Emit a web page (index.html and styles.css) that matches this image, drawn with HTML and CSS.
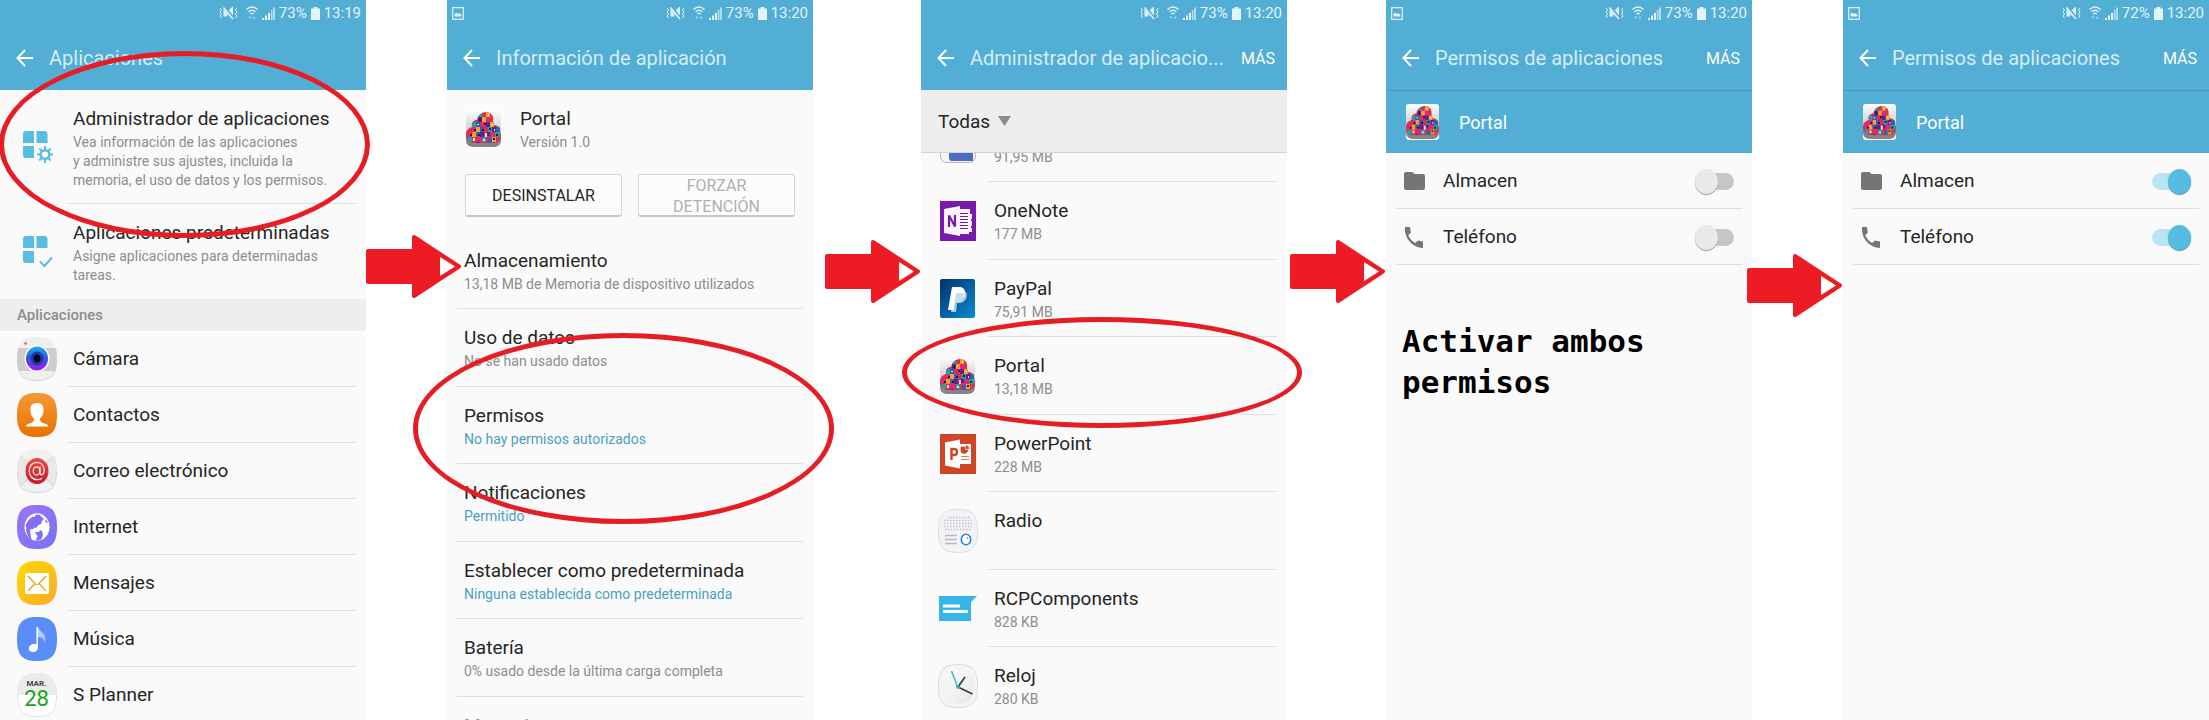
FILE: index.html
```html
<!DOCTYPE html>
<html lang="es">
<head>
<meta charset="utf-8">
<meta name="viewport" content="width=device-width, initial-scale=1">
<title>Activar permisos de Portal</title>
<link rel="stylesheet" href="styles.css">
</head>
<body>
<svg class="defs" width="0" height="0" aria-hidden="true">
  <defs>
    <linearGradient id="g-orange" x1="0" y1="0" x2="0" y2="1"><stop offset="0" stop-color="#f39a35"/><stop offset="1" stop-color="#ea7100"/></linearGradient>
    <linearGradient id="g-violet" x1="0" y1="0" x2="1" y2="1"><stop offset="0" stop-color="#9d74f5"/><stop offset="1" stop-color="#7672f8"/></linearGradient>
    <linearGradient id="g-yellow" x1="0" y1="0" x2="1" y2="1"><stop offset="0" stop-color="#fddb00"/><stop offset="1" stop-color="#fda827"/></linearGradient>
    <linearGradient id="g-lens" x1="0" y1="0" x2="0" y2="1"><stop offset="0" stop-color="#12b5ea"/><stop offset=".5" stop-color="#3552e0"/><stop offset="1" stop-color="#a417f5"/></linearGradient>
    <linearGradient id="g-mail" x1="0" y1="0" x2="0" y2="1"><stop offset="0" stop-color="#ee4a3f"/><stop offset="1" stop-color="#cb1730"/></linearGradient>
    <linearGradient id="g-pay" x1="0" y1="0" x2="1" y2="1"><stop offset="0" stop-color="#05306f"/><stop offset="1" stop-color="#078cd2"/></linearGradient>
    <linearGradient id="g-tile" x1="0" y1="0" x2="0" y2="1"><stop offset="0" stop-color="#fdfdfd"/><stop offset=".55" stop-color="#cfcfcf"/><stop offset="1" stop-color="#858585"/></linearGradient>
    <linearGradient id="g-soft" x1="0" y1="0" x2="1" y2="1"><stop offset="0" stop-color="#fbfbfb"/><stop offset="1" stop-color="#e8e6ea"/></linearGradient>
    <clipPath id="c-squircle"><path d="M20 0C34 0 40 5 40 22S34 44 20 44 0 39 0 22 6 0 20 0z"/></clipPath>
    <clipPath id="c-cloud"><path d="M7 33a8 8 0 0 1-7-8c0-5 3-7 6-8-1-5 2-7 5-7 1-5 5-8 9-8s8 3 7 9l1 4c4 0 7 3 6 7 2 3 1 11-5 11z"/></clipPath>

    <symbol id="mute" viewBox="0 0 19 14">
      <path d="M4.500 3.500h3.500v7H4.500zM14 .5v12.500l-6-4.500V5.500z" fill="currentColor"/>
      <path d="M5 .5l9.500 12.500" stroke="#52aed5" stroke-width="3.400"/>
      <path d="M4.500 1.500l9.500 11.500" stroke="currentColor" stroke-width="1.500"/>
      <path d="M1 2l1.500 2L1 6l1.500 2L1 10l1.500 2M18 2l-1.500 2L18 6l-1.500 2 1.500 2-1.500 2" fill="none" stroke="currentColor"/>
    </symbol>
    <symbol id="wifi" viewBox="0 0 12 14">
      <path d="M.5 3.500q5.500-5 11 0M2.500 5.800q3.500-3 7 0M4.300 8q1.700-1.500 3.400 0" fill="none" stroke="currentColor" stroke-width="1.400"/>
      <path d="M2.500 10.500h3L4 13zM6.500 12.500h3L8 10z" fill="currentColor" opacity=".6"/>
    </symbol>
    <symbol id="signal" viewBox="0 0 13 13">
      <path d="M0 11h2v2H0zM3 8.500h2V13H3zM6 6h2v7H6z" fill="currentColor"/>
      <path d="M8.800 3h1.700v10H8.800zM11 .5h2V13h-2z" fill="currentColor" opacity=".65"/>
    </symbol>
    <symbol id="battery" viewBox="0 0 9 13"><path d="M2.500 0h4v1.500H9V13H0V1.500h2.500z" fill="currentColor"/></symbol>
    <symbol id="picture" viewBox="0 0 12 13">
      <rect x=".7" y=".7" width="10.600" height="11.600" fill="none" stroke="currentColor" stroke-width="1.200"/>
      <path d="M2.500 9.500V7l2-1.500L6 7l1.500-1 2 2v1.500z" fill="currentColor"/>
    </symbol>
    <symbol id="back" viewBox="0 0 18 18"><path d="M17 9H2M9 1L1.500 9 9 17" fill="none" stroke="currentColor" stroke-width="2"/></symbol>

    <symbol id="tiles" viewBox="0 0 30 32">
      <path d="M3 0h8v12H0V3q0-3 3-3zM13.500 0h8q3 0 3 3v9h-11zM0 15h11v12H3q-3 0-3-3z" fill="#59bce2"/>
    </symbol>
    <symbol id="gear" viewBox="0 0 16 17">
      <circle cx="8" cy="8.500" r="4.300" fill="none" stroke="#59bce2" stroke-width="2.400"/>
      <path d="M8 0v4M8 13v4M0 8.500h3.500M12.500 8.500H16M2.300 2.500L5 5.200M11 11.800l2.700 2.700M13.700 2.500L11 5.200M5 11.800l-2.700 2.700" stroke="#59bce2" stroke-width="2"/>
    </symbol>

    <symbol id="portal" viewBox="0 0 35 38">
      <rect width="35" height="38" rx="3" fill="url(#g-tile)"/>
      <path d="M0 28v7q0 3 3 3h29q3 0 3-3v-7z" fill="#fff"/>
      <path d="M0 24h35v6q0 7-7 7H7q-7 0-7-7z" fill="#858585"/>
      <g clip-path="url(#c-cloud)">
        <path d="M0 0h35v38H0z" fill="#d8324a"/>
        <path d="M12 2h4v5h-4zM6 12h4v5H6zM22 17h4v5h-4zM2 27h4v5H2zM29 22h5v5h-5zM16 27h4v5h-4z" fill="#1fa5a0"/>
        <path d="M16 7h4v5h-4zM10 17h4v5h-4zM24 12h4v5h-4zM6 22h4v5H6zM26 27h4v5h-4zM20 2h4v5h-4z" fill="#f0a42c"/>
        <path d="M12 7h4v5h-4zM20 12h4v5h-4zM14 22h4v5h-4zM26 17h4v5h-4zM20 22h4v4h-4zM10 32h4v4h-4z" fill="#5b2390"/>
        <path d="M20 7h4v5h-4zM6 17h4v5H6zM16 12h4v5h-4zM1 22h5v5H1zM24 22h4v5h-4zM12 27h4v5h-4z" fill="#e02583"/>
        <path d="M10 12h4v5h-4zM14 17h4v5h-4zM30 17h4v5h-4zM10 22h4v4h-4zM22 28h4v6h-4z" fill="#2f5fb8"/>
        <path d="M13 9h2v2h-2zM18 13h2v2h-2zM23 18h2v2h-2zM8 19h2v2H8zM12 24h2v2h-2zM27 28h2v2h-2zM30 24h2v2h-2zM4 24h2v2H4zM16 19h2v2h-2z" fill="#2a1830"/>
        <path d="M22 4h1v2h-1zM25 14h2v1h-2zM19 23h2v4h-2zM7 28h2v3H7zM28 19h1v2h-1zM11 14h2v1h-2zM17 29h2v2h-2z" fill="#f6d9e2"/>
      </g>
    </symbol>

    <symbol id="camera" viewBox="0 0 40 44">
      <g clip-path="url(#c-squircle)">
        <path d="M0 0h40v44H0z" fill="#efefef"/><path d="M0 11h40v23H0z" fill="#cdcdcd"/>
        <path d="M20 43.500C34 43.500 39.500 39 39.500 22" fill="none" stroke="#cfcfcf"/><path d="M20 43.500C6 43.500 .5 39 .5 22" fill="none" stroke="#cfcfcf"/>
      </g>
      <circle cx="8.500" cy="6.500" r="1.300" fill="#f0603a"/>
      <ellipse cx="20" cy="21.500" rx="12.500" ry="13.500" fill="#fff"/>
      <ellipse cx="20" cy="21.500" rx="11" ry="12" fill="url(#g-lens)"/>
      <ellipse cx="20" cy="21.500" rx="6.500" ry="7" fill="#243aa8"/>
      <ellipse cx="20" cy="21.500" rx="3.500" ry="4" fill="#08081c"/>
    </symbol>
    <symbol id="contact" viewBox="0 0 40 44">
      <path d="M0 0h40v44H0z" fill="url(#g-orange)" clip-path="url(#c-squircle)"/>
      <path d="M20 10c5 0 7 3 6.500 8-.3 4-2 6-3.500 7.500 0 3 1 4 4 4.800 3 .8 4 1.700 4 3.200H9c0-1.500 1-2.400 4-3.200 3-.8 4-1.800 4-4.800-1.500-1.500-3.200-3.500-3.500-7.500-.5-5 1.500-8 6.500-8z" fill="#fff"/>
    </symbol>
    <symbol id="mail" viewBox="0 0 40 44">
      <g clip-path="url(#c-squircle)">
        <path d="M0 0h40v44H0z" fill="#f1f1f1"/><path d="M0 4l20 18L0 40zM40 4L20 22l20 18z" fill="#e8e8e8"/>
        <path d="M0 4l20 18L0 40M40 4L20 22l20 18" fill="none" stroke="#d3d3d3"/>
        <path d="M20 43.500C34 43.500 39.500 39 39.500 22M20 43.500C6 43.500 .5 39 .5 22" fill="none" stroke="#d3d3d3"/>
      </g>
      <ellipse cx="20" cy="22" rx="11.500" ry="13" fill="url(#g-mail)"/>
      <g fill="none" stroke="#ffe9e6" stroke-width="1.300">
        <ellipse cx="19.500" cy="22" rx="3.300" ry="4"/>
        <path d="M23 17.500v6.500q.5 2.500 2.500 1.500c3-3 2-12-5.500-12.200-10.500 0-10.500 17.400.5 17.400q2.500 0 4.500-1.500"/>
      </g>
    </symbol>
    <symbol id="globe" viewBox="0 0 40 44">
      <path d="M0 0h40v44H0z" fill="url(#g-violet)" clip-path="url(#c-squircle)"/>
      <ellipse cx="20" cy="22" rx="12.500" ry="13.800" fill="#fff"/>
      <path d="M11.500 15l4-3.500 2 .5 1.500-2.500 4 .5 2 2.500 2 1-2 2.500-1 3-2.500 1-2.500 3-2-.5-1 2-2.500-.5-1 2-3-2-1-4z" fill="#836ff6"/>
      <path d="M9 23.500l4 1.500 4.500 2.500-.5 3-2 2.500-1 2C11 32 9 28 9 23.500zM18 27l4 0 1-2 2 1 1 4-1.500 4-3 1.500-3 0 2-4z" fill="#836ff6"/>
      <path d="M13 25l4 1.500 2 2.500-2 2.500-1 3.500-2-2z" fill="#fff"/>
      <path d="M29 14l2 4-3-1z" fill="#836ff6"/>
    </symbol>
    <symbol id="sms" viewBox="0 0 40 44">
      <path d="M0 0h40v44H0z" fill="url(#g-yellow)" clip-path="url(#c-squircle)"/>
      <rect x="8" y="12" width="24" height="21" rx="1.500" fill="#fff"/>
      <path d="M11 15l7.500 8q1.500 1.200 3 0L29 15M11 30l6.500-7M29 30l-6.500-7" fill="none" stroke="#e9a820" stroke-width="1.400"/>
    </symbol>
    <symbol id="music" viewBox="0 0 40 44">
      <path d="M0 0h40v44H0z" fill="#5a8df8" clip-path="url(#c-squircle)"/>
      <path d="M21 10c2 6 9 5 7 16-1-4-3-6-7-6z" fill="#b3cbfc"/>
      <path d="M19.500 10H21v20c0 3-2 5-5 5-5 0-5.500-5-1.500-7.500 2-1 4-1 5 0z" fill="#fff"/>
    </symbol>
    <symbol id="planner" viewBox="0 0 40 44">
      <g clip-path="url(#c-squircle)"><path d="M0 0h40v44H0z" fill="#fff"/><path d="M0 0h40v22H0z" fill="#ebebeb"/>
      <path d="M20 43.500C34 43.500 39.500 39 39.500 22M20 43.500C6 43.500 .5 39 .5 22" fill="none" stroke="#dcdcdc"/></g>
    </symbol>

    <symbol id="mystery" viewBox="0 0 36 38"><rect x=".5" y=".5" width="35" height="37" rx="6" fill="#f4f4f4" stroke="#b8b8b8"/><path d="M9 2h24v34H12q-3 0-3-3z" fill="#4b6bc0"/></symbol>
    <symbol id="onenote" viewBox="0 0 36 40">
      <path d="M0 0h36v40H0z" fill="#7719aa"/>
      <path d="M19 8h11v5h2v5h-1v2h1v5h-1v2h1v4h-3v2H19z" fill="#fbf5ff"/>
      <path d="M20 12.500h8M20 15.500h8M20 18.500h8M20 21.500h8M20 24.500h8M20 27.500h8" stroke="#7719aa"/>
      <path d="M4 8l16-3v30L4 32z" fill="#fbf5ff"/>
      <path d="M9 26V14.500l6 11V14" fill="none" stroke="#7719aa" stroke-width="2.200"/>
    </symbol>
    <symbol id="paypal" viewBox="0 0 35 39">
      <rect width="35" height="39" rx="2" fill="url(#g-pay)"/>
      <path d="M15 12h9c5 1 3.500 12-5 12h-2l-1 9h-5z" fill="#a9cde6"/>
      <path d="M12 8h8c8 0 6 15-3 15h-2l-1.500 8H8z" fill="#fff"/>
      <path d="M16 14h7.500c1 5-2 9-6.500 9h-2.500z" fill="#c9dfef"/>
    </symbol>
    <symbol id="powerpoint" viewBox="0 0 36 40">
      <path d="M0 0h36v40H0z" fill="#d04526"/>
      <path d="M20 10h11v20H20z" fill="#fff"/>
      <path d="M21 13h4v3h3a4 4 0 0 1-7 2zM26 11.500a4 4 0 0 1 3 3h-3zM21 22.500h8M21 25.500h8" fill="#d04526" stroke="#d04526" stroke-width=".7"/>
      <path d="M5 8.500l15-3v29l-15-3z" fill="#fff"/>
      <path d="M11.500 26V15h2.500c4 0 4 6 0 6h-2" fill="none" stroke="#d04526" stroke-width="2.400"/>
    </symbol>
    <symbol id="radio" viewBox="0 0 40 44">
      <path d="M20 .5C34 .5 39.500 5 39.500 22S34 43.500 20 43.500 .5 39 .5 22 6 .5 20 .5z" fill="#f3f2f6" stroke="#dddde2"/>
      <path d="M9 8.500h24M6 11.500h28M6 14.500h28M6 17.500h28M7 20.500h26" stroke="#c6c6ca" stroke-width="1.500" stroke-dasharray="1.500 1.500"/>
      <path d="M7 26.500h12M7 30.500h12M7 34.500h12" stroke="#b9b9bd" stroke-width="1.500"/>
      <ellipse cx="28" cy="30.500" rx="4.700" ry="5.200" fill="#fff" stroke="#2a87dd" stroke-width="1.600"/><circle cx="29.500" cy="29" r=".8" fill="#e04545"/>
    </symbol>
    <symbol id="rcp" viewBox="0 0 38 25">
      <path d="M0 0h38l-6 6v19H0z" fill="#35b5e8"/><path d="M4 10h17M4 15.500h25" stroke="#fff" stroke-width="2.800"/>
    </symbol>
    <symbol id="clock" viewBox="0 0 40 44">
      <path d="M20 .5C34 .5 39.500 5 39.500 22S34 43.500 20 43.500 .5 39 .5 22 6 .5 20 .5z" fill="#f4f4f4" stroke="#dcdcdc"/>
      <path d="M20 4C32 4 36 8 36 21S32 40 20 40 5 36 5 21 8 4 20 4z" fill="url(#g-soft)"/>
      <path d="M20 23l7-10M20 23l14.500 7" stroke="#3a3f42" stroke-width="1.800"/><path d="M13.500 7L20 24" stroke="#46bcb6" stroke-width="1.500"/><circle cx="20" cy="23" r="1.800" fill="#2fa9a4"/>
    </symbol>

    <symbol id="folder" viewBox="0 0 21 18"><path d="M2 0h6.500l2 2H19q2 0 2 2v12q0 2-2 2H2q-2 0-2-2V2q0-2 2-2z" fill="#757575"/></symbol>
    <symbol id="phone" viewBox="0 0 20 21"><path d="M1 0h5l.8 5.500-2.600 3Q6.500 13.500 11 16l3-2.500 5 1V21C9 20.500 0 12 1 0z" fill="#757575"/></symbol>
    <symbol id="arrow" viewBox="0 0 96 63">
      <path d="M2 16h46V2l45 29.500L48 61V47H2z" fill="#ed1c24" stroke="#ed1c24" stroke-width="4" stroke-linejoin="round"/>
      <path d="M74 22v19l15-9.500z" fill="#fff"/>
    </symbol>
  </defs>
</svg>

<main class="flow">
  <section class="screen">
    <header class="head">
      <div class="status"><span class="status-end"><svg class="i-mute"><use href="#mute"/></svg><svg class="i-wifi"><use href="#wifi"/></svg><svg class="i-signal"><use href="#signal"/></svg><span>73%</span><svg class="i-battery"><use href="#battery"/></svg><time>13:19</time></span></div>
      <div class="bar"><button class="back" aria-label="Atrás"><svg><use href="#back"/></svg></button><h1 class="title">Aplicaciones</h1></div>
    </header>
    <div class="body">
      <ul class="list inset">
        <li class="row"><span class="pic"><span class="tiles"><svg class="i-tiles"><use href="#tiles"/></svg><svg class="i-gear"><use href="#gear"/></svg></span></span><a class="text" href="#administrador"><span class="name">Administrador de aplicaciones</span><span class="note">Vea información de las aplicaciones<br>y administre sus ajustes, incluida la<br>memoria, el uso de datos y los permisos.</span></a></li>
        <li class="row last"><span class="pic"><span class="tiles"><svg class="i-tiles"><use href="#tiles"/></svg><svg class="i-check" viewBox="0 0 14 12"><path d="M1 5.500l4.500 4.500L13 1.500" fill="none" stroke="#59bce2" stroke-width="2"/></svg></span></span><a class="text" href="#predeterminadas"><span class="name">Aplicaciones predeterminadas</span><span class="note">Asigne aplicaciones para determinadas<br>tareas.</span></a></li>
      </ul>
      <h2 class="section">Aplicaciones</h2>
      <ul class="list inset short">
        <li class="row"><span class="pic"><svg class="i-app"><use href="#camera"/></svg></span><a class="text" href="#camara"><span class="name">Cámara</span></a></li>
        <li class="row"><span class="pic"><svg class="i-app"><use href="#contact"/></svg></span><a class="text" href="#contactos"><span class="name">Contactos</span></a></li>
        <li class="row"><span class="pic"><svg class="i-app"><use href="#mail"/></svg></span><a class="text" href="#correo"><span class="name">Correo electrónico</span></a></li>
        <li class="row"><span class="pic"><svg class="i-app"><use href="#globe"/></svg></span><a class="text" href="#internet"><span class="name">Internet</span></a></li>
        <li class="row"><span class="pic"><svg class="i-app"><use href="#sms"/></svg></span><a class="text" href="#mensajes"><span class="name">Mensajes</span></a></li>
        <li class="row"><span class="pic"><svg class="i-app"><use href="#music"/></svg></span><a class="text" href="#musica"><span class="name">Música</span></a></li>
        <li class="row"><span class="pic"><span class="calendar"><svg class="i-app"><use href="#planner"/></svg><span class="date"><span class="month">MAR.</span><span class="day">28</span></span></span></span><a class="text" href="#planner-app"><span class="name">S Planner</span></a></li>
      </ul>
    </div>
    <div class="ring ring-manager"></div>
  </section>

  <div class="gap gap-start"><svg class="i-arrow"><use href="#arrow"/></svg></div>

  <section class="screen">
    <header class="head">
      <div class="status"><svg class="i-picture"><use href="#picture"/></svg><span class="status-end"><svg class="i-mute"><use href="#mute"/></svg><svg class="i-wifi"><use href="#wifi"/></svg><svg class="i-signal"><use href="#signal"/></svg><span>73%</span><svg class="i-battery"><use href="#battery"/></svg><time>13:20</time></span></div>
      <div class="bar"><button class="back" aria-label="Atrás"><svg><use href="#back"/></svg></button><h1 class="title">Información de aplicación</h1></div>
    </header>
    <div class="body">
      <div class="app"><span class="pic"><svg class="i-portal"><use href="#portal"/></svg></span><div class="text"><span class="name">Portal</span><span class="note">Versión 1.0</span></div></div>
      <div class="actions"><button class="action">DESINSTALAR</button><button class="action" disabled>FORZAR DETENCIÓN</button></div>
      <ul class="list plain tall">
        <li class="row"><a class="text" href="#almacenamiento"><span class="name">Almacenamiento</span><span class="note">13,18 MB de Memoria de dispositivo utilizados</span></a></li>
        <li class="row"><a class="text" href="#datos"><span class="name">Uso de datos</span><span class="note">No se han usado datos</span></a></li>
        <li class="row"><a class="text" href="#permisos"><span class="name">Permisos</span><span class="note accent">No hay permisos autorizados</span></a></li>
        <li class="row"><a class="text" href="#notificaciones"><span class="name">Notificaciones</span><span class="note accent">Permitido</span></a></li>
        <li class="row"><a class="text" href="#predeterminada"><span class="name">Establecer como predeterminada</span><span class="note accent">Ninguna establecida como predeterminada</span></a></li>
        <li class="row"><a class="text" href="#bateria"><span class="name">Batería</span><span class="note">0% usado desde la última carga completa</span></a></li>
        <li class="row"><a class="text" href="#memoria"><span class="name muted">Memoria</span></a></li>
      </ul>
    </div>
    <div class="ring ring-permissions"></div>
  </section>

  <div class="gap gap-low"><svg class="i-arrow"><use href="#arrow"/></svg></div>

  <section class="screen">
    <header class="head">
      <div class="status"><span class="status-end"><svg class="i-mute"><use href="#mute"/></svg><svg class="i-wifi"><use href="#wifi"/></svg><svg class="i-signal"><use href="#signal"/></svg><span>73%</span><svg class="i-battery"><use href="#battery"/></svg><time>13:20</time></span></div>
      <div class="bar"><button class="back" aria-label="Atrás"><svg><use href="#back"/></svg></button><h1 class="title">Administrador de aplicacio...</h1><button class="more">MÁS</button></div>
    </header>
    <div class="filter"><select class="filter-select" aria-label="Filtro"><option>Todas</option></select><svg class="i-caret" viewBox="0 0 13 10"><path d="M0 0h13L6.500 10z" fill="#8c8c8c"/></svg></div>
    <div class="body">
      <ul class="list inset tall scrolled">
        <li class="row"><span class="pic"><svg class="i-office"><use href="#mystery"/></svg></span><a class="text" href="#app"><span class="name">&nbsp;</span><span class="note">91,95 MB</span></a></li>
        <li class="row"><span class="pic"><svg class="i-office"><use href="#onenote"/></svg></span><a class="text" href="#onenote-app"><span class="name">OneNote</span><span class="note">177 MB</span></a></li>
        <li class="row"><span class="pic"><svg class="i-paypal"><use href="#paypal"/></svg></span><a class="text" href="#paypal-app"><span class="name">PayPal</span><span class="note">75,91 MB</span></a></li>
        <li class="row"><span class="pic"><svg class="i-portal"><use href="#portal"/></svg></span><a class="text" href="#portal-app"><span class="name">Portal</span><span class="note">13,18 MB</span></a></li>
        <li class="row"><span class="pic"><svg class="i-office"><use href="#powerpoint"/></svg></span><a class="text" href="#powerpoint-app"><span class="name">PowerPoint</span><span class="note">228 MB</span></a></li>
        <li class="row"><span class="pic"><svg class="i-app"><use href="#radio"/></svg></span><a class="text" href="#radio-app"><span class="name">Radio</span></a></li>
        <li class="row"><span class="pic"><svg class="i-rcp"><use href="#rcp"/></svg></span><a class="text" href="#rcp-app"><span class="name">RCPComponents</span><span class="note">828 KB</span></a></li>
        <li class="row"><span class="pic"><svg class="i-app"><use href="#clock"/></svg></span><a class="text" href="#reloj-app"><span class="name">Reloj</span><span class="note">280 KB</span></a></li>
      </ul>
    </div>
    <div class="ring ring-portal"></div>
  </section>

  <div class="gap gap-low"><svg class="i-arrow"><use href="#arrow"/></svg></div>

  <section class="screen">
    <header class="head">
      <div class="status"><svg class="i-picture"><use href="#picture"/></svg><span class="status-end"><svg class="i-mute"><use href="#mute"/></svg><svg class="i-wifi"><use href="#wifi"/></svg><svg class="i-signal"><use href="#signal"/></svg><span>73%</span><svg class="i-battery"><use href="#battery"/></svg><time>13:20</time></span></div>
      <div class="bar"><button class="back" aria-label="Atrás"><svg><use href="#back"/></svg></button><h1 class="title">Permisos de aplicaciones</h1><button class="more">MÁS</button></div>
    </header>
    <div class="banner"><svg class="i-banner"><use href="#portal"/></svg><span>Portal</span></div>
    <div class="body">
      <ul class="list plain perms">
        <li class="row"><label class="perm"><span class="perm-pic"><svg class="i-folder"><use href="#folder"/></svg></span><span class="name">Almacen</span><input class="switch" type="checkbox" role="switch"></label></li>
        <li class="row"><label class="perm"><span class="perm-pic"><svg class="i-phone"><use href="#phone"/></svg></span><span class="name">Teléfono</span><input class="switch" type="checkbox" role="switch"></label></li>
      </ul>
      <p class="hint">Activar ambos permisos</p>
    </div>
  </section>

  <div class="gap gap-lowest"><svg class="i-arrow"><use href="#arrow"/></svg></div>

  <section class="screen">
    <header class="head">
      <div class="status"><svg class="i-picture"><use href="#picture"/></svg><span class="status-end"><svg class="i-mute"><use href="#mute"/></svg><svg class="i-wifi"><use href="#wifi"/></svg><svg class="i-signal"><use href="#signal"/></svg><span>72%</span><svg class="i-battery"><use href="#battery"/></svg><time>13:20</time></span></div>
      <div class="bar"><button class="back" aria-label="Atrás"><svg><use href="#back"/></svg></button><h1 class="title">Permisos de aplicaciones</h1><button class="more">MÁS</button></div>
    </header>
    <div class="banner"><svg class="i-banner"><use href="#portal"/></svg><span>Portal</span></div>
    <div class="body">
      <ul class="list plain perms">
        <li class="row"><label class="perm"><span class="perm-pic"><svg class="i-folder"><use href="#folder"/></svg></span><span class="name">Almacen</span><input class="switch" type="checkbox" role="switch" checked></label></li>
        <li class="row"><label class="perm"><span class="perm-pic"><svg class="i-phone"><use href="#phone"/></svg></span><span class="name">Teléfono</span><input class="switch" type="checkbox" role="switch" checked></label></li>
      </ul>
    </div>
  </section>
</main>
</body>
</html>
```
FILE: styles.css
```css
:root {
  --blue: #52aed5;
  --red: #e51e26;
  --ink: #252525;
  --grey: #8d8d8d;
  --line: #e0e0e0;
  --paper: #fafafa;
}

* { box-sizing: border-box; }

body {
  margin: 0;
  background: #fff;
  color: var(--ink);
  font-family: Roboto, "Liberation Sans", sans-serif;
  font-size: 19px;
}

button, select, input { font: inherit; color: inherit; margin: 0; }
button { background: none; border: 0; padding: 0; cursor: pointer; }
a { color: inherit; text-decoration: none; }
svg { display: block; flex: none; }
.defs { position: absolute; }

.flow {
  display: grid;
  grid-template-columns:
    minmax(0, 366fr) minmax(0, 81fr) minmax(0, 366fr) minmax(0, 108fr)
    minmax(0, 366fr) minmax(0, 99fr) minmax(0, 366fr) minmax(0, 91fr) minmax(0, 366fr);
  height: 100vh;
  overflow: hidden;
}

.screen {
  position: relative;
  display: flex;
  flex-direction: column;
  min-height: 0;
  background: var(--paper);
}

.body { flex: 1; min-height: 0; overflow: hidden; }

/* Header */
.head { background: var(--blue); color: #fff; }

.status {
  display: flex;
  align-items: center;
  height: 26px;
  padding: 0 5px;
  font-size: 15px;
  color: #e2f3fa;
}
.status-end { display: flex; align-items: center; gap: 4px; margin-left: auto; }
.i-mute { width: 19px; height: 14px; margin-right: 4px; }
.i-wifi { width: 12px; height: 14px; }
.i-signal { width: 13px; height: 13px; }
.i-battery { width: 9px; height: 13px; }
.i-picture { width: 12px; height: 13px; }

.bar { display: flex; align-items: center; height: 64px; padding: 0 12px 0 16px; }
.back { width: 18px; height: 18px; margin-right: 15px; }
.back svg { width: 18px; height: 18px; }
.title {
  flex: 1;
  min-width: 0;
  margin: 0;
  overflow: hidden;
  white-space: nowrap;
  font-size: 20px;
  font-weight: 400;
  line-height: 28px;
  color: #d5edf7;
}
.more { font-size: 16px; }

/* Lists */
.list { list-style: none; margin: 0; padding: 0; }
.row { display: flex; position: relative; }
.row::after {
  content: "";
  position: absolute;
  bottom: 0;
  left: 10px;
  right: 10px;
  border-bottom: 1px solid var(--line);
}
.inset .row::after { left: 67px; }
.row.last::after { display: none; }

.pic {
  display: flex;
  flex: none;
  align-items: center;
  justify-content: center;
  width: 73px;
}
.text {
  display: flex;
  flex: 1;
  flex-direction: column;
  min-width: 0;
  padding: 15px 0 14px;
  white-space: nowrap;
}
.name { font-size: 19px; line-height: 28px; }
.note { font-size: 14px; line-height: 19px; color: var(--grey); }
.note.accent { color: #4a9fc2; }
.name.muted { color: var(--grey); }
.plain .text { padding-left: 17px; }

.tall .row { height: 77px; }
.tall .row:nth-child(even) { height: 78px; }
.short .row { height: 56px; }
.short .text { padding: 0; justify-content: center; }
.scrolled { margin-top: -48px; }

.i-app { width: 40px; height: 44px; }
.i-office { width: 36px; height: 40px; }
.i-paypal { width: 35px; height: 39px; }
.i-portal { width: 35px; height: 38px; }
.i-rcp { width: 38px; height: 25px; }

.tiles { display: grid; padding-left: 2px; }
.i-tiles { grid-area: 1 / 1; width: 30px; height: 32px; }
.i-gear { grid-area: 1 / 1; place-self: end; width: 16px; height: 17px; }
.i-check { grid-area: 1 / 1; place-self: end; width: 14px; height: 12px; }

.calendar { display: grid; place-items: center; }
.calendar > * { grid-area: 1 / 1; }
.date { display: flex; flex-direction: column; align-items: center; }
.month { font-size: 8px; font-weight: 700; line-height: 8px; color: #444; }
.day { font-size: 22px; line-height: 22px; color: #19a319; }

.section {
  margin: 0;
  padding: 0 17px;
  background: #eee;
  color: var(--grey);
  font-size: 15px;
  font-weight: 500;
  line-height: 32px;
}

/* Application details */
.app { display: flex; height: 78px; }
.actions { display: grid; grid-template-columns: 1fr 1fr; gap: 16px; padding: 6px 18px 15px; }
.action {
  height: 43px;
  border: 1px solid #d6d6d6;
  border-bottom: 2px solid #c6c6c6;
  border-radius: 3px;
  background: #fcfcfc;
  padding: 0 20px;
  font-size: 16px;
  line-height: 21px;
}
.action:disabled { color: #b0b0b0; }

.filter {
  display: flex;
  align-items: center;
  gap: 7px;
  height: 63px;
  padding: 0 17px;
  background: #eee;
  border-bottom: 1px solid #d4d4d4;
}
.filter-select { appearance: none; border: 0; padding: 0; background: none; }
.i-caret { width: 13px; height: 10px; }

/* Permissions */
.banner {
  display: flex;
  align-items: center;
  gap: 20px;
  height: 63px;
  padding: 0 20px;
  background: var(--blue);
  border-top: 1px solid #4699bd;
  color: #fff;
  font-size: 18px;
}
.i-banner { width: 33px; height: 36px; }

.perms .row { height: 56px; }
.perm { display: flex; flex: 1; align-items: center; padding: 0 18px; }
.perm-pic { width: 39px; }
.perm .name { flex: 1; }
.i-folder { width: 21px; height: 18px; }
.i-phone { width: 20px; height: 21px; }

.switch {
  appearance: none;
  display: flex;
  align-items: center;
  width: 39px;
  height: 26px;
}
.switch::before {
  content: "";
  width: 39px;
  height: 17px;
  border-radius: 9px;
  background: #c6c6c6;
}
.switch::after {
  content: "";
  flex: none;
  width: 23px;
  height: 25px;
  margin-left: -39px;
  border-radius: 50%;
  background: #e9e9e9;
  box-shadow: 0 1px 1px #999;
}
.switch:checked::before { background: #b9e4f4; }
.switch:checked::after { margin-left: -23px; background: #56bce3; box-shadow: 0 1px 1px #4a93af; }

.hint {
  margin: 0;
  padding: 56px 16px;
  max-width: 300px;
  color: #000;
  font: bold 31px/41px "DejaVu Sans Mono", monospace;
}

/* Annotations */
.gap { display: flex; justify-content: flex-end; z-index: 2; padding-top: 240px; }
.gap-start { justify-content: flex-start; padding-top: 235px; }
.gap-lowest { padding-top: 254px; }
.i-arrow { width: 96px; height: 63px; }

.ring {
  position: absolute;
  z-index: 1;
  border: 5px solid var(--red);
  border-radius: 50%;
  pointer-events: none;
}
.ring-manager { top: 51px; left: -1px; right: -4px; height: 187px; }
.ring-permissions { top: 333px; left: -34px; right: -21px; height: 191px; }
.ring-portal { top: 317px; left: -19px; right: -15px; height: 111px; }
```
